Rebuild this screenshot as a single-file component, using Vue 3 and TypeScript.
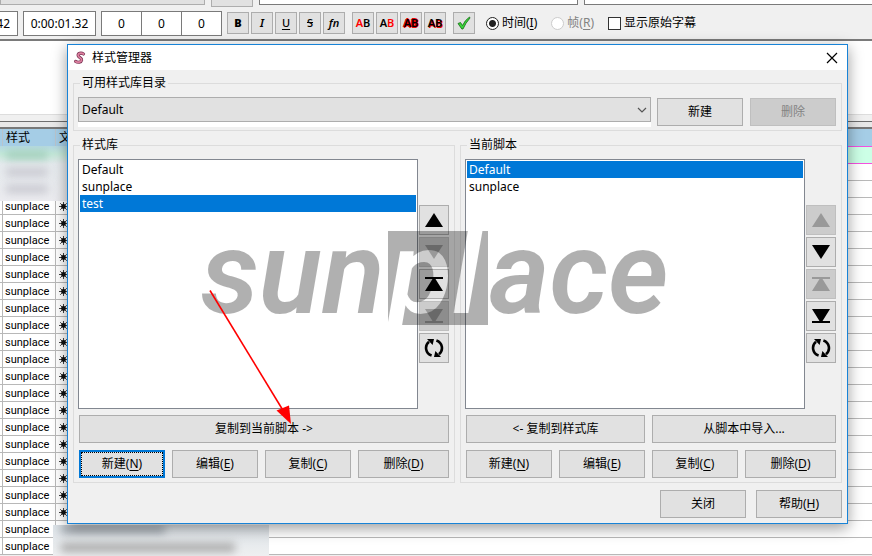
<script setup lang="ts">
import { ref } from 'vue'

type Glyph = 'up' | 'down' | 'top' | 'bottom' | 'cycle'

interface MoveButton {
  glyph: Glyph
  label: string
  disabled: boolean
}

interface StyleAction {
  text: string
  key: string
}

const glyphs: Record<Glyph, string> = {
  up: 'M9 2 L18 16 H0 Z',
  down: 'M9 16 L18 2 H0 Z',
  top: 'M0 2 H18 V4 H10.5 L18 16 H0 L7.5 4 H0 Z',
  bottom: 'M0 16 H18 V14 H10.5 L18 2 H0 L7.5 14 H0 Z',
  cycle: ''
}

const moveLabels: Record<Glyph, string> = {
  up: '上移',
  down: '下移',
  top: '移到顶部',
  bottom: '移到底部',
  cycle: '排序'
}

function moveButtons(disabled: Glyph[]): MoveButton[] {
  const order: Glyph[] = ['up', 'down', 'top', 'bottom', 'cycle']
  return order.map((glyph) => ({ glyph, label: moveLabels[glyph], disabled: disabled.includes(glyph) }))
}

const actions: StyleAction[] = [
  { text: '新建', key: 'N' },
  { text: '编辑', key: 'E' },
  { text: '复制', key: 'C' },
  { text: '删除', key: 'D' }
]

const storageSelected = ref('test')
const scriptSelected = ref('Default')
const catalog = ref('Default')
const mode = ref('time')
const showOriginal = ref(false)

const storageStyles = ['Default', 'sunplace', 'test']
const scriptStyles = ['Default', 'sunplace']
const storageMoves = moveButtons(['down', 'bottom'])
const scriptMoves = moveButtons(['up', 'top'])
const rows = Array.from({ length: 24 }, (_, i) => i)
</script>

<template>
  <div class="app">
    <div class="strip">
      <span class="strip-button wide"></span>
      <span class="strip-button small"></span>
      <span class="strip-field first"></span>
      <span class="strip-field rest"></span>
    </div>

    <div class="toolbar">
      <input class="field cut" value="42" aria-label="开始时间" />
      <input class="field time" value="0:00:01.32" aria-label="持续时间" />
      <div class="margins">
        <input class="field" value="0" aria-label="左边距" />
        <input class="field" value="0" aria-label="右边距" />
        <input class="field" value="0" aria-label="垂直边距" />
      </div>
      <div class="tools">
        <button class="tool heavy" type="button">B</button>
        <button class="tool slant" type="button">I</button>
        <button class="tool under" type="button">U</button>
        <button class="tool strike" type="button">S</button>
        <button class="tool slant" type="button">fn</button>
      </div>
      <div class="tools colors">
        <button class="tool ab" type="button"><span class="red">A</span>B</button>
        <button class="tool ab" type="button">A<span class="red">B</span></button>
        <button class="tool ab outline" type="button">AB</button>
        <button class="tool ab shade" type="button">AB</button>
      </div>
      <button class="tool commit" type="button" aria-label="确认">
        <svg width="16" height="16" viewBox="0 0 16 16">
          <path d="M2 8.5 L4.5 7.5 L6.5 10.5 Q9 5 13.5 2 L14 3 Q9.5 8 7 14 H5.8 Z" fill="#3bd53b" stroke="#136b13" stroke-width="0.8" />
        </svg>
      </button>
      <label class="option">
        <input v-model="mode" type="radio" name="mode" value="time" />
        <span>时间(<u>I</u>)</span>
      </label>
      <label class="option muted">
        <input v-model="mode" type="radio" name="mode" value="frame" disabled />
        <span>帧(<u>R</u>)</span>
      </label>
      <label class="option original">
        <input v-model="showOriginal" type="checkbox" />
        <span>显示原始字幕</span>
      </label>
    </div>

    <div class="editor"></div>
    <div class="splitter"></div>

    <div class="grid">
      <table>
        <colgroup>
          <col class="c-edge" />
          <col class="c-style" />
          <col />
        </colgroup>
        <thead>
          <tr>
            <th></th>
            <th>样式</th>
            <th>文本</th>
          </tr>
        </thead>
        <tbody>
          <tr v-for="row in rows" :key="row" :class="{ current: row === 0 }">
            <td></td>
            <td>{{ row < 3 ? '' : 'sunplace' }}</td>
            <td>
              <svg v-if="row > 2 && row < 22" class="sun" width="9" height="9" viewBox="0 0 9 9">
                <circle cx="4.5" cy="4.5" r="2.4" />
                <path d="M4.5 0 V9 M0 4.5 H9 M1.2 1.2 L7.8 7.8 M7.8 1.2 L1.2 7.8" stroke="#111" stroke-width="0.8" />
              </svg>
            </td>
          </tr>
        </tbody>
      </table>
      <div class="haze haze-top"><i></i><i></i><i></i></div>
      <div class="haze haze-bottom"><i></i><i></i></div>
    </div>

    <section class="dialog" role="dialog" aria-labelledby="dialog-title">
      <header class="titlebar">
        <svg class="logo" width="14" height="14" viewBox="0 0 14 14">
          <path d="M10.5 3 C8 1.4 4.8 2.4 5.2 4.6 C5.6 6.8 9.2 6.8 8.6 9.2 C8.2 11.4 4.8 11.8 2.6 10.4" fill="none" stroke="#7a3554" stroke-width="3.2" stroke-linecap="round" />
          <path d="M10.5 3 C8 1.4 4.8 2.4 5.2 4.6 C5.6 6.8 9.2 6.8 8.6 9.2 C8.2 11.4 4.8 11.8 2.6 10.4" fill="none" stroke="#dd7f9f" stroke-width="1.8" stroke-linecap="round" />
        </svg>
        <h1 id="dialog-title">样式管理器</h1>
        <button class="close" type="button" aria-label="关闭窗口">
          <svg width="12" height="12" viewBox="0 0 12 12">
            <path d="M1 1 L11 11 M11 1 L1 11" stroke="#000" stroke-width="1.2" />
          </svg>
        </button>
      </header>

      <div class="body">
        <fieldset>
          <legend>可用样式库目录</legend>
          <div class="catalog">
            <div class="combo">
              <select v-model="catalog" aria-label="可用样式库目录">
                <option>Default</option>
              </select>
              <svg class="chevron" width="10" height="6" viewBox="0 0 10 6">
                <path d="M1 1 L5 5 L9 1" fill="none" stroke="#555" stroke-width="1.2" />
              </svg>
            </div>
            <div class="catalog-actions">
              <button class="btn" type="button">新建</button>
              <button class="btn" type="button" disabled>删除</button>
            </div>
          </div>
        </fieldset>

        <div class="panels">
          <fieldset>
            <legend>样式库</legend>
            <div class="picker">
              <ul class="list" role="listbox" aria-label="样式库">
                <li
                  v-for="name in storageStyles"
                  :key="name"
                  role="option"
                  :aria-selected="name === storageSelected"
                  @click="storageSelected = name"
                >{{ name }}</li>
              </ul>
              <div class="moves">
                <button v-for="m in storageMoves" :key="m.glyph" class="move" type="button" :disabled="m.disabled" :aria-label="m.label">
                  <svg v-if="m.glyph === 'cycle'" width="20" height="20" viewBox="0 0 20 20">
                    <path d="M7.6 17.6 A8 8 0 0 1 5 3.8 M12.4 2.4 A8 8 0 0 1 15 16.2" fill="none" stroke="currentColor" stroke-width="2.6" />
                    <path d="M3 1 H10 L8.6 7 Z M17 19 H10 L11.4 13 Z" />
                  </svg>
                  <svg v-else width="18" height="18" viewBox="0 0 18 18"><path :d="glyphs[m.glyph]" /></svg>
                </button>
              </div>
            </div>
            <div class="copy">
              <button class="btn" type="button">复制到当前脚本 -&gt;</button>
            </div>
            <div class="actions">
              <button v-for="a in actions" :key="a.key" class="btn" :class="{ focused: a.key === 'N' }" type="button">
                {{ a.text }}(<u>{{ a.key }}</u>)
              </button>
            </div>
          </fieldset>

          <fieldset>
            <legend>当前脚本</legend>
            <div class="picker">
              <ul class="list" role="listbox" aria-label="当前脚本">
                <li
                  v-for="name in scriptStyles"
                  :key="name"
                  role="option"
                  :aria-selected="name === scriptSelected"
                  @click="scriptSelected = name"
                >{{ name }}</li>
              </ul>
              <div class="moves">
                <button v-for="m in scriptMoves" :key="m.glyph" class="move" type="button" :disabled="m.disabled" :aria-label="m.label">
                  <svg v-if="m.glyph === 'cycle'" width="20" height="20" viewBox="0 0 20 20">
                    <path d="M7.6 17.6 A8 8 0 0 1 5 3.8 M12.4 2.4 A8 8 0 0 1 15 16.2" fill="none" stroke="currentColor" stroke-width="2.6" />
                    <path d="M3 1 H10 L8.6 7 Z M17 19 H10 L11.4 13 Z" />
                  </svg>
                  <svg v-else width="18" height="18" viewBox="0 0 18 18"><path :d="glyphs[m.glyph]" /></svg>
                </button>
              </div>
            </div>
            <div class="copy double">
              <button class="btn" type="button">&lt;- 复制到样式库</button>
              <button class="btn" type="button">从脚本中导入...</button>
            </div>
            <div class="actions">
              <button v-for="a in actions" :key="a.key" class="btn" type="button">
                {{ a.text }}(<u>{{ a.key }}</u>)
              </button>
            </div>
          </fieldset>
        </div>

        <footer class="footer">
          <button class="btn" type="button">关闭</button>
          <button class="btn" type="button">帮助(<u>H</u>)</button>
        </footer>
      </div>
    </section>

    <svg class="overlay" width="500" height="260" viewBox="190 190 500 260">
      <defs>
        <mask id="knockout">
          <rect x="388" y="231" width="100" height="94" fill="#fff" />
          <text class="mark" x="389" y="313" fill="#000">pl</text>
        </mask>
      </defs>
      <g fill="#000" fill-opacity="0.31">
        <text class="mark" x="201" y="313">sun</text>
        <rect x="388" y="231" width="100" height="94" mask="url(#knockout)" />
        <text class="mark" x="489" y="313">ace</text>
      </g>
      <path d="M210 290.5 L284 412" stroke="#f00" stroke-width="1.6" />
      <path d="M276.5 410.5 L289 405.5 L291 424 Z" fill="#f00" />
    </svg>
  </div>
</template>

<style>
body {
  margin: 0;
  background: #fff;
}
</style>

<style scoped>
.app {
  position: relative;
  height: 100vh;
  overflow: hidden;
  background: #f0f0f0;
  color: #000;
  font: 12px/16px "Noto Sans", "Noto Sans CJK SC", sans-serif;
}

.app * {
  box-sizing: border-box;
}

button,
input,
select {
  margin: 0;
  font: inherit;
  color: inherit;
}

u {
  text-underline-offset: 2px;
}

.strip {
  display: flex;
  align-items: flex-start;
  gap: 6px;
  height: 7px;
}

.strip-button {
  border: 1px solid #adadad;
  border-top: 0;
  background: #e1e1e1;
}

.strip-button.wide {
  width: 205px;
  height: 5px;
}

.strip-button.small {
  width: 42px;
  height: 7px;
}

.strip-field {
  height: 5px;
  border: 1px solid #7a7a7a;
  border-top: 0;
  background: #fff;
}

.strip-field.first {
  width: 319px;
}

.strip-field.rest {
  flex: 1;
  border-right: 0;
}

.toolbar {
  display: flex;
  align-items: center;
  height: 32px;
}

.field {
  width: 41px;
  height: 25px;
  padding: 0;
  border: 1px solid #7a7a7a;
  border-radius: 0;
  background: #fff;
  text-align: center;
}

.field.cut {
  width: 18px;
  padding-right: 7px;
  border-left: 0;
  direction: rtl;
  text-align: left;
}

.field.time {
  width: 73px;
  margin: 0 5px;
}

.margins {
  display: flex;
}

.margins .field + .field {
  margin-left: -1px;
}

.tools {
  display: flex;
  gap: 2px;
  margin-left: 5px;
}

.tools.colors {
  margin-left: 7px;
}

.tool {
  display: flex;
  align-items: center;
  justify-content: center;
  width: 22px;
  height: 22px;
  padding: 0;
  border: 1px solid #adadad;
  border-radius: 0;
  background: #e1e1e1;
  font-size: 11px;
  font-weight: 500;
}

.heavy {
  font-weight: 900;
}

.slant {
  font-style: italic;
  font-weight: 600;
}

.under {
  text-decoration: underline;
  text-underline-offset: 2px;
}

.strike {
  text-decoration: line-through;
}

.ab {
  font-weight: 600;
}

.red {
  color: #f00;
}

.outline {
  text-shadow: -1px 0 #e00, 1px 0 #e00, 0 -1px #e00, 0 1px #e00;
}

.shade {
  text-shadow: 1px 1px #e00;
}

.tool.commit {
  margin-left: 7px;
}

.option {
  display: flex;
  align-items: center;
  gap: 3px;
  margin-left: 11px;
}

.option.muted {
  margin-left: 14px;
  color: #838383;
}

.option.original {
  margin-left: 14px;
}

.option input {
  appearance: none;
  width: 13px;
  height: 13px;
  border: 1px solid #333;
  background: #fff;
}

.option input[type="radio"] {
  border-radius: 50%;
}

.option input[type="radio"]:checked {
  border-color: #222;
  background: radial-gradient(circle, #222 3px, #fff 4px);
}

.option input:disabled {
  border-color: #ccc;
}

.editor {
  height: 76px;
  border-top: 2px solid #7a7a7a;
  border-bottom: 1px solid #ddd;
  background: #fff;
}

.splitter {
  height: 14px;
  background: linear-gradient(#f0f0f0 6px, #6e6e6e 6px, #6e6e6e 7px, #e8e8e8 7px, #e8e8e8 12px, #777 12px);
}

.grid {
  position: relative;
}

table {
  width: 100%;
  table-layout: fixed;
  border-collapse: separate;
  border-spacing: 0;
  background: #fff;
}

.c-edge {
  width: 3px;
}

.c-style {
  width: 53px;
}

th {
  height: 18px;
  padding: 1px 0 0 3px;
  border-right: 1px solid #b9c4cc;
  border-bottom: 1px solid #f551e0;
  background: #a5cde6;
  font-weight: 400;
  line-height: 16px;
  text-align: left;
}

td {
  height: 17px;
  padding: 1px 0 0 2px;
  border-right: 1px solid #b8b8b8;
  border-bottom: 1px solid #b8b8b8;
  font: 11px/15px Roboto, sans-serif;
}

th:first-child,
td:first-child {
  padding: 0;
}

th:last-child,
td:last-child {
  padding-left: 3px;
  border-right: 0;
}

.current td {
  border-bottom-color: #f551e0;
  background: #ccffe6;
}

.sun {
  display: block;
}

.haze {
  position: absolute;
  overflow: hidden;
}

.haze i {
  display: block;
  filter: blur(4px);
}

.haze-top {
  top: 17px;
  left: 0;
  width: 68px;
  height: 55px;
  background: linear-gradient(#b6d9e2, #c5e9da 8px, #e6ebee 18px, #ececf0);
}

.haze-top i {
  width: 42px;
  height: 8px;
  margin: 5px 0 9px 6px;
  background: #c6c6ce;
}

.haze-top i:first-child {
  background: #9fccb9;
}

.haze-bottom {
  top: 396px;
  left: 53px;
  width: 216px;
  height: 40px;
  background: linear-gradient(#dde3e8, #f3f3f3);
}

.haze-bottom i {
  width: 104px;
  height: 7px;
  margin: 1px 0 10px 8px;
  background: #9ba3aa;
}

.haze-bottom i + i {
  width: 174px;
  height: 9px;
  background: #aaa;
}

.dialog {
  position: absolute;
  top: 44px;
  right: 24px;
  left: 67px;
  border: 1px solid #1883d7;
  background: #f0f0f0;
  box-shadow: 0 4px 14px rgba(0, 0, 0, 0.4);
}

.titlebar {
  display: flex;
  align-items: center;
  height: 25px;
  padding: 0 5px;
  background: #fff;
}

h1 {
  margin: 0 auto 0 5px;
  font: inherit;
}

.close {
  display: flex;
  align-items: center;
  justify-content: center;
  width: 20px;
  height: 20px;
  padding: 0;
  border: 0;
  background: none;
}

.body {
  display: flex;
  flex-direction: column;
  gap: 6px;
  padding: 5px;
}

fieldset {
  min-width: 0;
  margin: 0;
  padding: 6px 5px 4px 4px;
  border: 1px solid #dcdcdc;
}

legend {
  margin-left: 2px;
  padding: 0 2px;
}

.body > fieldset {
  padding-bottom: 3px;
}

.catalog {
  display: flex;
  align-items: center;
  gap: 6px;
}

.combo {
  position: relative;
  flex: 1;
  height: 30px;
  background: #fff;
}

.combo select {
  appearance: none;
  display: block;
  width: 100%;
  height: 25px;
  padding: 0 3px;
  border: 1px solid #adadad;
  border-radius: 0;
  background: #e1e1e1;
}

.chevron {
  position: absolute;
  top: 10px;
  right: 4px;
  pointer-events: none;
}

.catalog-actions {
  display: grid;
  grid-template-columns: 86px 86px;
  gap: 7px;
}

.btn {
  height: 28px;
  padding: 0;
  border: 1px solid #adadad;
  border-radius: 0;
  background: #e1e1e1;
  white-space: nowrap;
}

.btn:disabled {
  border-color: #bfbfbf;
  background: #ccc;
  color: #838383;
}

.btn.focused {
  border: 2px solid #0078d7;
  outline: 1px dotted #000;
  outline-offset: -3px;
}

.panels {
  display: grid;
  grid-template-columns: 1fr 1fr;
  gap: 5px;
}

.picker {
  display: flex;
  align-items: center;
  gap: 1px;
}

.list {
  flex: 1;
  height: 250px;
  margin: 0;
  padding: 1px;
  border: 1px solid #828790;
  background: #fff;
  list-style: none;
}

.list li {
  padding: 0 2px;
  line-height: 17px;
}

.list li[aria-selected="true"] {
  background: #0078d7;
  color: #fff;
}

.moves {
  display: grid;
  gap: 2px;
}

.move {
  display: flex;
  align-items: center;
  justify-content: center;
  width: 30px;
  height: 30px;
  padding: 0;
  border: 1px solid #adadad;
  border-radius: 0;
  background: #e1e1e1;
}

.move:disabled {
  border-color: #bfbfbf;
  background: #ccc;
  color: #999;
}

.move svg {
  fill: currentColor;
}

.copy {
  display: grid;
  margin: 6px 0 7px 1px;
}

.copy.double {
  grid-template-columns: 179fr 184fr;
  gap: 7px;
}

.actions {
  display: grid;
  grid-template-columns: 86fr 86fr 86fr 91fr;
  gap: 7px;
  margin-left: 1px;
}

.footer {
  display: grid;
  grid-template-columns: 86px 86px;
  justify-content: end;
  gap: 10px;
  padding-top: 1px;
}

.overlay {
  position: absolute;
  top: 190px;
  left: 190px;
  pointer-events: none;
}

.mark {
  font: italic 600 116px/1 Roboto, sans-serif;
}
</style>
